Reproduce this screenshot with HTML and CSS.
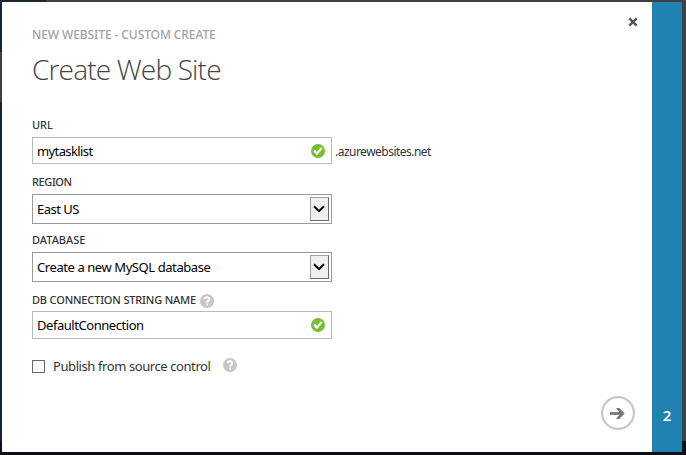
FILE: index.html
```
<!DOCTYPE html>
<html lang="en">
<head>
<meta charset="utf-8">
<title>Create Web Site</title>
<link rel="stylesheet" href="styles.css">
</head>
<body>
<svg class="symbols" aria-hidden="true">
  <symbol id="check" viewBox="0 0 14 14"><circle cx="7" cy="7" r="7" fill="#76bf30"/><path d="M3 6.6 6 9.6 10.7 3.9" fill="none" stroke="#fff" stroke-width="2.2"/></symbol>
  <symbol id="help" viewBox="0 0 14 14"><circle cx="7" cy="7" r="7" fill="#c6c6c6"/><path d="M4.7 5C4.8 2.8 9.3 2.7 9.3 5 9.3 6.7 7.1 6.6 7.1 8.6M7.1 9.6v2" fill="none" stroke="#fff" stroke-width="2"/></symbol>
  <symbol id="chevron" viewBox="0 0 12 8"><path d="M1 1.2 6 6.2 11 1.2" fill="none" stroke="#000" stroke-width="2"/></symbol>
</svg>
<div class="screen">
  <main class="dialog">
    <section class="content">
      <header class="head">
        <div><div class="crumb"><span class="t-crumb">NEW WEBSITE - CUSTOM CREATE</span></div>
        <h1><span class="t-title">Create Web Site</span></h1></div>
        <button class="close" aria-label="Close"><svg width="10" height="10" viewBox="0 0 10 10"><path d="M1.3 1.3 8.7 8.7M8.7 1.3 1.3 8.7" stroke="#555" stroke-width="2.4"/></svg></button>
      </header>
      <form class="form">
        <div class="label"><span class="t-url">URL</span></div>
        <div class="row">
          <div class="field input"><span class="t-site">mytasklist</span><svg class="icon"><use href="#check"/></svg></div>
          <span class="suffix t-suffix">.azurewebsites.net</span>
        </div>
        <div class="label region"><span class="t-region">REGION</span></div>
        <div class="field select"><span class="t-east">East US</span><span class="drop"><svg class="chevron"><use href="#chevron"/></svg></span></div>
        <div class="label database"><span class="t-database">DATABASE</span></div>
        <div class="field select"><span class="t-mysql">Create a new MySQL database</span><span class="drop"><svg class="chevron"><use href="#chevron"/></svg></span></div>
        <div class="label connection"><span class="t-conn">DB CONNECTION STRING NAME</span><svg class="icon"><use href="#help"/></svg></div>
        <div class="field input tall"><span class="t-default">DefaultConnection</span><svg class="icon"><use href="#check"/></svg></div>
        <div class="publish"><span class="box"></span><span class="t-publish">Publish from source control</span><svg class="icon"><use href="#help"/></svg></div>
      </form>
      <footer class="foot">
        <svg width="34" height="34" viewBox="0 0 34 34"><circle cx="17" cy="17" r="15.9" fill="#fff" stroke="#c8c8c8" stroke-width="2.2"/><path d="M9 17.5h12.5" stroke="#767676" stroke-width="2.8"/><path d="M15 12h3.3l5.4 5.5-5.4 5.5H15l4.5-5.5z" fill="#767676"/></svg>
      </footer>
    </section>
    <aside class="steps">2</aside>
  </main>
</div>
</body>
</html>
```
FILE: styles.css
```
* { box-sizing: border-box; }
body { margin: 0; font-family: "Noto Sans", sans-serif; color: #333; }
.symbols { display: none; }
.screen {
  width: 686px; height: 455px; padding: 2px 4px 3px 2px;
  background:
    linear-gradient(#101116, #101116) 0 441px / 686px 14px no-repeat,
    linear-gradient(#1b2935, #1b2935) 0 0 / 46px 2px no-repeat,
    linear-gradient(#132432 52px, #3f3f3f 52px 102px, #132432 102px) 0 0 / 2px 441px no-repeat,
    #414141;
}
.dialog { display: flex; height: 450px; background: #fff; }
.content { width: 650px; padding: 0 17px 0 30px; display: flex; flex-direction: column; }
.head { display: flex; justify-content: space-between; height: 114px; padding-top: 24px; }
.crumb { height: 16px; line-height: 18px; font-size: 12px; font-weight: 500; color: #a3a3a3; }
h1 { margin: 6px 0 0; font: 300 28px/42px "Open Sans", sans-serif; color: #444; }
.close { width: 10px; height: 10px; margin: -9px -3px 0 0; padding: 0; border: 0; background: none; }
.close svg { display: block; }
.form { height: 277px; }
.label { height: 21px; line-height: 18px; font-size: 11px; font-weight: 500; display: flex; }
.row { display: flex; align-items: center; }
.field { width: 300px; border: 1px solid #bababa; display: flex; align-items: center; justify-content: space-between; padding: 0 6px 0 4px; color: #000; font-size: 13px; }
.input { height: 27px; }
.tall { height: 28px; }
.select { height: 30px; border-color: #9a9a9a; padding-right: 2px; }
.icon { width: 14px; height: 14px; flex: none; }
.suffix { margin: 2px 0 0 3px; font-size: 12px; }
.region { margin-top: 9px; }
.database { margin-top: 7px; }
.connection { margin-top: 9px; height: 20px; }
.connection .icon { margin: 3px 0 0 4px; }
.drop { width: 19px; height: 24px; border: 1px solid #a0a0a0; border-right-color: #666; border-bottom-color: #666; background: #efefef; display: flex; align-items: center; justify-content: center; }
.chevron { width: 12px; height: 8px; margin: -1px 1px 0 0; }
.publish { display: flex; align-items: center; margin-top: 17px; height: 20px; font-size: 13px; }
.box { width: 13px; height: 13px; border: 1px solid #666; margin-right: 8px; }
.publish .icon { margin: 0 0 2px 12px; }
.t-crumb { letter-spacing: -0.09px; }
.t-title { letter-spacing: -0.83px; }
.t-site { letter-spacing: -0.6px; }
.t-suffix { letter-spacing: -0.52px; }
.t-region { letter-spacing: -0.4px; }
.t-east { letter-spacing: -0.5px; }
.t-mysql { letter-spacing: -0.42px; }
.t-conn { letter-spacing: -0.17px; }
.t-default { letter-spacing: -0.45px; }
.t-publish { letter-spacing: -0.41px; }
.foot { display: flex; justify-content: flex-end; padding-top: 3px; }
.steps { width: 30px; background: #1f82b0; color: #fff; font-size: 15px; font-weight: 600; text-align: center; padding-top: 403px; line-height: 20px; }
```
